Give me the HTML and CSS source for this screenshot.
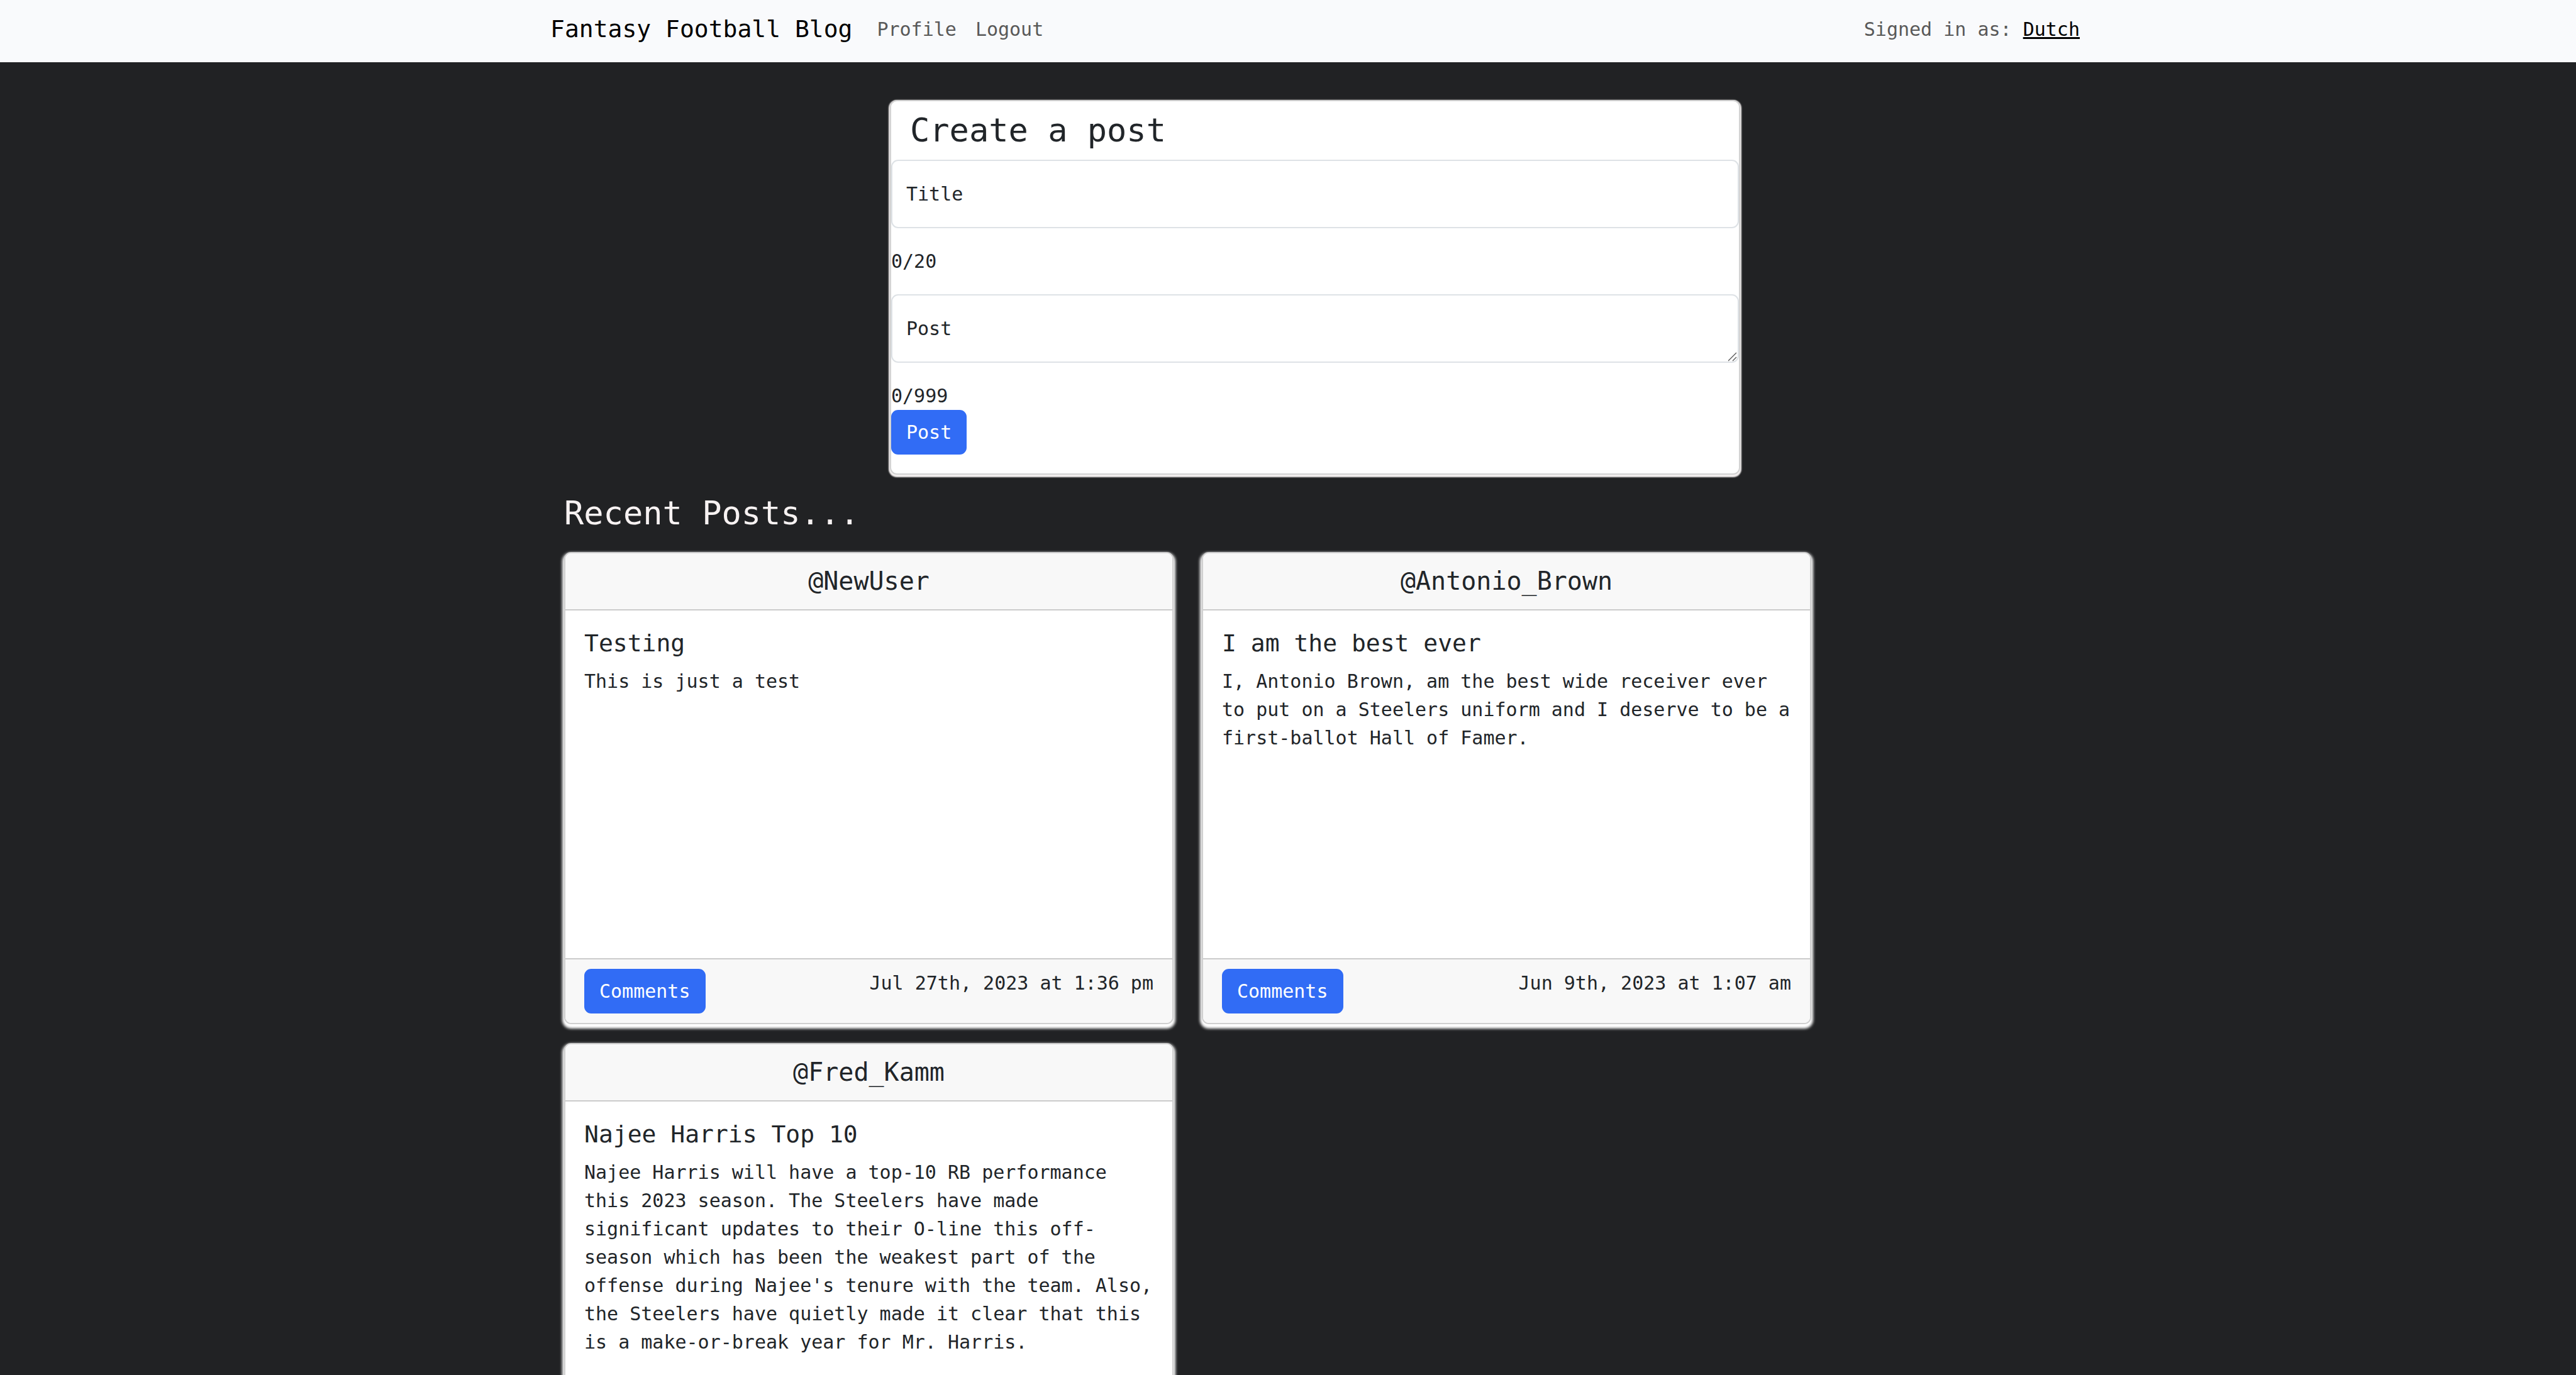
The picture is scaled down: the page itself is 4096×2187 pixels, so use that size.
FILE: index.html
```html
<!DOCTYPE html>
<html lang="en">
<head>
  <meta charset="utf-8">
  <meta name="viewport" content="width=device-width, initial-scale=1">
  <title>Fantasy Football Blog</title>
  <link rel="stylesheet" href="styles.css">
</head>
<body>
  <header class="navbar">
    <nav class="container navbar-inner">
      <a class="brand" href="#">Fantasy Football Blog</a>
      <a class="nav-link" href="#profile">Profile</a>
      <a class="nav-link" href="#logout">Logout</a>
      <p class="signed-in">Signed in as: <a href="#profile">Dutch</a></p>
    </nav>
  </header>

  <main class="page">
    <form class="post-form">
      <h1 class="heading form-heading">Create a post</h1>
      <div class="field">
        <input class="control" id="title" type="text" maxlength="20">
        <label class="field-label" for="title">Title</label>
      </div>
      <p class="counter">0/20</p>
      <div class="field">
        <textarea class="control" id="post" maxlength="999"></textarea>
        <label class="field-label" for="post">Post</label>
      </div>
      <p class="counter counter-last">0/999</p>
      <button class="btn" type="submit">Post</button>
    </form>

    <section class="container recent">
      <h2 class="heading recent-heading">Recent Posts...</h2>
      <div class="cards">
        <article class="card">
          <h3 class="card-header">@NewUser</h3>
          <div class="card-body">
            <h4 class="card-title">Testing</h4>
            <p class="card-text">This is just a test</p>
          </div>
          <footer class="card-footer">
            <button class="btn" type="button">Comments</button>
            <time datetime="2023-07-27T13:36">Jul 27th, 2023 at 1:36 pm</time>
          </footer>
        </article>
        <article class="card">
          <h3 class="card-header">@Antonio_Brown</h3>
          <div class="card-body">
            <h4 class="card-title">I am the best ever</h4>
            <p class="card-text">I, Antonio Brown, am the best wide receiver ever to put on a Steelers uniform and I deserve to be a first-ballot Hall of Famer.</p>
          </div>
          <footer class="card-footer">
            <button class="btn" type="button">Comments</button>
            <time datetime="2023-06-09T01:07">Jun 9th, 2023 at 1:07 am</time>
          </footer>
        </article>
        <article class="card">
          <h3 class="card-header">@Fred_Kamm</h3>
          <div class="card-body">
            <h4 class="card-title">Najee Harris Top 10</h4>
            <p class="card-text">Najee Harris will have a top-10 RB performance this 2023 season. The Steelers have made significant updates to their O-line this off-season which has been the weakest part of the offense during Najee's tenure with the team. Also, the Steelers have quietly made it clear that this is a make-or-break year for Mr. Harris.</p>
          </div>
        </article>
      </div>
    </section>
  </main>
</body>
</html>
```

FILE: styles.css
```css
*,
*::before,
*::after {
  box-sizing: border-box;
}

body {
  margin: 0;
  background: #212224;
  color: #212529;
  font: 30px/45px "DejaVu Sans Mono", "Liberation Mono", monospace;
}

h1, h2, h3, h4, p {
  margin: 0;
  font-weight: 400;
}

.container {
  width: 100%;
  max-width: 2432px;
  margin: 0 auto;
}

/* Navigation */
.navbar {
  padding: 9px 0 15px 86px;
  background: #f9fafc;
}

.navbar-inner {
  display: flex;
  align-items: center;
}

.brand {
  margin-right: 24px;
  color: #000;
  font-size: 38px;
  text-decoration: none;
}

.nav-link {
  padding: 15px;
  color: #595959;
  text-decoration: none;
}

.signed-in {
  margin-left: auto;
  color: #595959;
}

.signed-in a {
  color: #000;
}

.page {
  padding: 60px 0 30px 86px;
}

.heading {
  font-size: 52px;
  line-height: 63px;
}

/* New post form */
.post-form {
  max-width: 1352px;
  margin: 0 auto;
  padding-bottom: 30px;
  border: 2px solid #d2d2d2;
  border-radius: 11px;
  background: #fff;
  box-shadow: 0 2px 2px 2px #f5f1f1;
}

.form-heading {
  padding: 15px 30px;
}

.field {
  position: relative;
}

.control {
  display: block;
  width: 100%;
  height: 109px;
  padding: 30px 22px;
  border: 2px solid #dee2e6;
  border-radius: 11px;
  background: #fff;
  color: inherit;
  font: inherit;
  resize: vertical;
}

.control::-webkit-resizer {
  background: url("data:image/svg+xml,%3Csvg xmlns='http://www.w3.org/2000/svg' width='15' height='15'%3E%3Cpath d='M0 14 13 1M7 14 13 8' fill='none' stroke='%23555' stroke-width='1.3'/%3E%3C/svg%3E") no-repeat right bottom;
}

.field-label {
  position: absolute;
  top: 32px;
  left: 24px;
  pointer-events: none;
}

.control:focus + .field-label {
  opacity: 0.65;
}

.counter {
  padding: 30px 0;
}

.counter-last {
  padding-bottom: 0;
}

.btn {
  display: block;
  padding: 11px 22px;
  border: 2px solid #316cf5;
  border-radius: 11px;
  background: #316cf5;
  color: #fff;
  font: inherit;
  cursor: pointer;
}

/* Recent posts */
.recent {
  padding: 30px 22px 0;
}

.recent-heading {
  color: #f7f2f2;
}

.cards {
  display: flex;
  flex-wrap: wrap;
  gap: 30px 45px;
  margin-top: 30px;
}

.card {
  display: flex;
  flex-direction: column;
  width: 969px;
  max-width: 100%;
  min-height: 751px;
  border: 2px solid #d0d0d0;
  border-radius: 11px;
  background: #fff;
  box-shadow: 0 4px 4px 3px #fff;
}

.card-header {
  padding: 22px 30px;
  border-bottom: 2px solid #cbcbcb;
  border-radius: 9px 9px 0 0;
  background: #f8f8f8;
  font-size: 40px;
  line-height: 45px;
  text-align: center;
}

.card-body {
  flex: 1;
  padding: 30px;
}

.card-title {
  margin-bottom: 15px;
  font-size: 38px;
  line-height: 45px;
}

.card-footer {
  display: flex;
  justify-content: space-between;
  align-items: flex-start;
  padding: 15px 30px;
  border-top: 2px solid #cbcbcb;
  border-radius: 0 0 9px 9px;
  background: #f8f8f8;
}
```
